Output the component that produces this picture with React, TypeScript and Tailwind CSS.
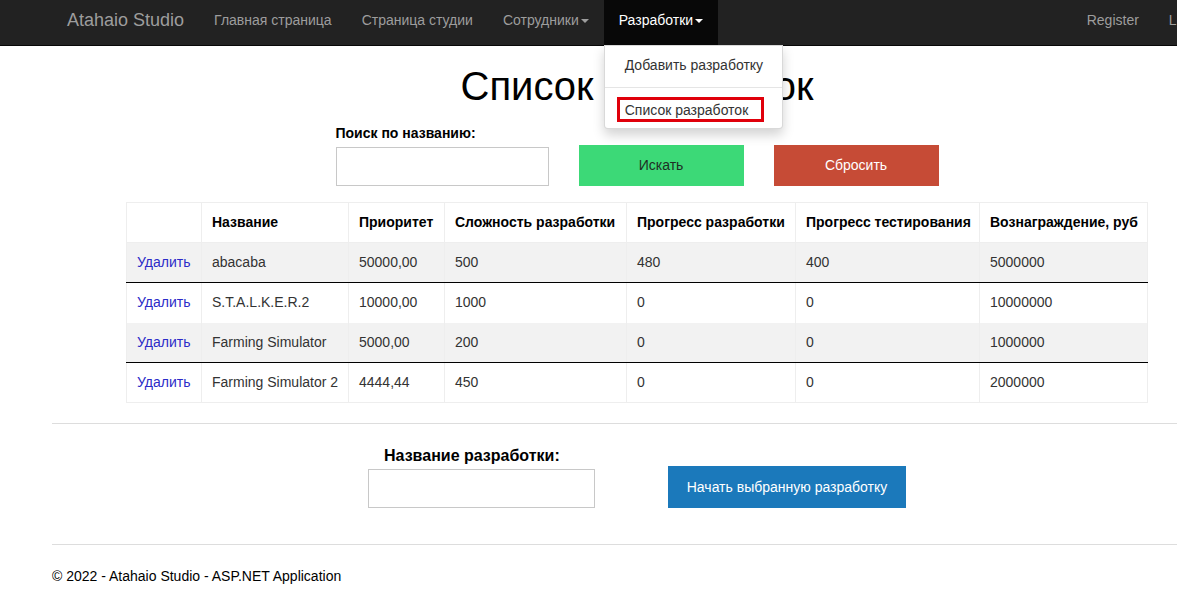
import React from 'react';

const rows = [
  { name: 'abacaba', priority: '50000,00', difficulty: '500', dev: '480', test: '400', reward: '5000000' },
  { name: 'S.T.A.L.K.E.R.2', priority: '10000,00', difficulty: '1000', dev: '0', test: '0', reward: '10000000' },
  { name: 'Farming Simulator', priority: '5000,00', difficulty: '200', dev: '0', test: '0', reward: '1000000' },
  { name: 'Farming Simulator 2', priority: '4444,44', difficulty: '450', dev: '0', test: '0', reward: '2000000' },
];

const Caret = () => (
  <span className="inline-block w-0 h-0 ml-[2px] align-middle border-t-[4px] border-x-[4px] border-x-transparent border-t-current" />
);

const NavLink = ({ children, active = false }: { children: React.ReactNode; active?: boolean }) => (
  <div className={`h-full px-[15px] pt-[10px] leading-[20px] text-[14px] whitespace-nowrap ${active ? 'bg-[#080808] text-white' : 'text-[#9d9d9d]'}`}>
    {children}
  </div>
);

export default function App() {
  return (
    <div className="w-[1177px] h-[602px] overflow-hidden bg-white text-[#333] font-['Liberation_Sans',Arial,sans-serif]">
      {/* Navbar */}
      <div className="h-[46px] bg-[#222] border-b border-[#080808] relative z-10">
        <div className="ml-[52px] w-[1170px] h-full flex">
          <div className="px-[15px] pt-[9px] leading-[22px] text-[18px] text-[#9d9d9d] whitespace-nowrap">Atahaio Studio</div>
          <NavLink>Главная страница</NavLink>
          <NavLink>Страница студии</NavLink>
          <NavLink>
            Сотрудники
            <Caret />
          </NavLink>
          <div className="relative h-full">
            <NavLink active>
              Разработки
              <Caret />
            </NavLink>
            <div className="absolute left-0 top-[45px] w-[179px] bg-white border border-black/15 rounded-b-[4px] shadow-[0_6px_12px_rgba(0,0,0,0.175)] py-[5px] text-[14px] text-[#333] whitespace-nowrap">
              <div className="px-[20px] leading-[26px] pt-[1px]">Добавить разработку</div>
              <div className="h-px bg-[#e5e5e5] my-[9px]" />
              <div className="relative px-[20px] leading-[26px]">
                Список разработок
                <div className="absolute left-[12px] top-0 w-[147px] h-[25px] border-[3px] border-[#e0000b]" />
              </div>
            </div>
          </div>
          <div className="ml-auto flex h-full">
            <NavLink>Register</NavLink>
            <NavLink>Log in</NavLink>
          </div>
        </div>
      </div>

      {/* Body */}
      <div className="ml-[52px] w-[1170px]">
        <h2 className="text-center text-[40px] leading-[44px] text-black mt-[18px] whitespace-nowrap">Список разработок</h2>

        <div className="flex justify-center items-end gap-[30px] mt-[15px]">
          <div className="flex flex-col">
            <label className="text-[14px] font-bold text-black leading-[20px] mb-[4px]">Поиск по названию:</label>
            <input className="w-[213px] h-[39px] border border-[#c8c8c8] bg-white outline-none" />
          </div>
          <button className="w-[165px] h-[41px] bg-[#3cd977] text-[14px] text-[#1f2f24]">Искать</button>
          <button className="w-[165px] h-[41px] bg-[#c64b36] text-[14px] text-white">Сбросить</button>
        </div>

        <div className="flex justify-center mt-[16px]">
          <table className="table-fixed border-collapse w-[1021px] text-[14px] border border-[#eee] whitespace-nowrap">
            <colgroup>
              <col className="w-[75px]" />
              <col className="w-[147px]" />
              <col className="w-[96px]" />
              <col className="w-[182px]" />
              <col className="w-[169px]" />
              <col className="w-[184px]" />
              <col className="w-[168px]" />
            </colgroup>
            <thead>
              <tr className="h-[40px] text-left text-black">
                <th className="border border-[#eee] px-[10px]"></th>
                <th className="border border-[#eee] px-[10px]">Название</th>
                <th className="border border-[#eee] px-[10px]">Приоритет</th>
                <th className="border border-[#eee] px-[10px]">Сложность разработки</th>
                <th className="border border-[#eee] px-[10px]">Прогресс разработки</th>
                <th className="border border-[#eee] px-[10px]">Прогресс тестирования</th>
                <th className="border border-[#eee] px-[10px]">Вознаграждение, руб</th>
              </tr>
            </thead>
            <tbody>
              {rows.map((r, i) => {
                const odd = i % 2 === 0;
                const cell = `border-x border-[#eee] px-[10px] ${odd ? 'border-b border-b-black' : ''}`;
                return (
                  <tr key={r.name} className={`h-[40px] ${odd ? 'bg-[#f2f2f2]' : 'bg-white'}`}>
                    <td className={cell}>
                      <span className="text-[#2b2bc8]">Удалить</span>
                    </td>
                    <td className={cell}>{r.name}</td>
                    <td className={cell}>{r.priority}</td>
                    <td className={cell}>{r.difficulty}</td>
                    <td className={cell}>{r.dev}</td>
                    <td className={cell}>{r.test}</td>
                    <td className={cell}>{r.reward}</td>
                  </tr>
                );
              })}
            </tbody>
          </table>
        </div>

        <hr className="mt-[20px] border-t border-[#ddd]" />

        <div className="flex justify-center items-end gap-[73px] mt-[22px]">
          <div className="flex flex-col">
            <label className="text-[16px] font-bold text-black leading-[20px] mb-[3px] ml-[16px]">Название разработки:</label>
            <input className="w-[227px] h-[39px] border border-[#c8c8c8] bg-white outline-none" />
          </div>
          <button className="w-[238px] h-[42px] bg-[#1b79bb] text-[14px] text-white">Начать выбранную разработку</button>
        </div>

        <hr className="mt-[36px] border-t border-[#ddd]" />

        <div className="mt-[21px] text-[14px] text-black leading-[20px]">© 2022 - Atahaio Studio - ASP.NET Application</div>
      </div>
    </div>
  );
}
